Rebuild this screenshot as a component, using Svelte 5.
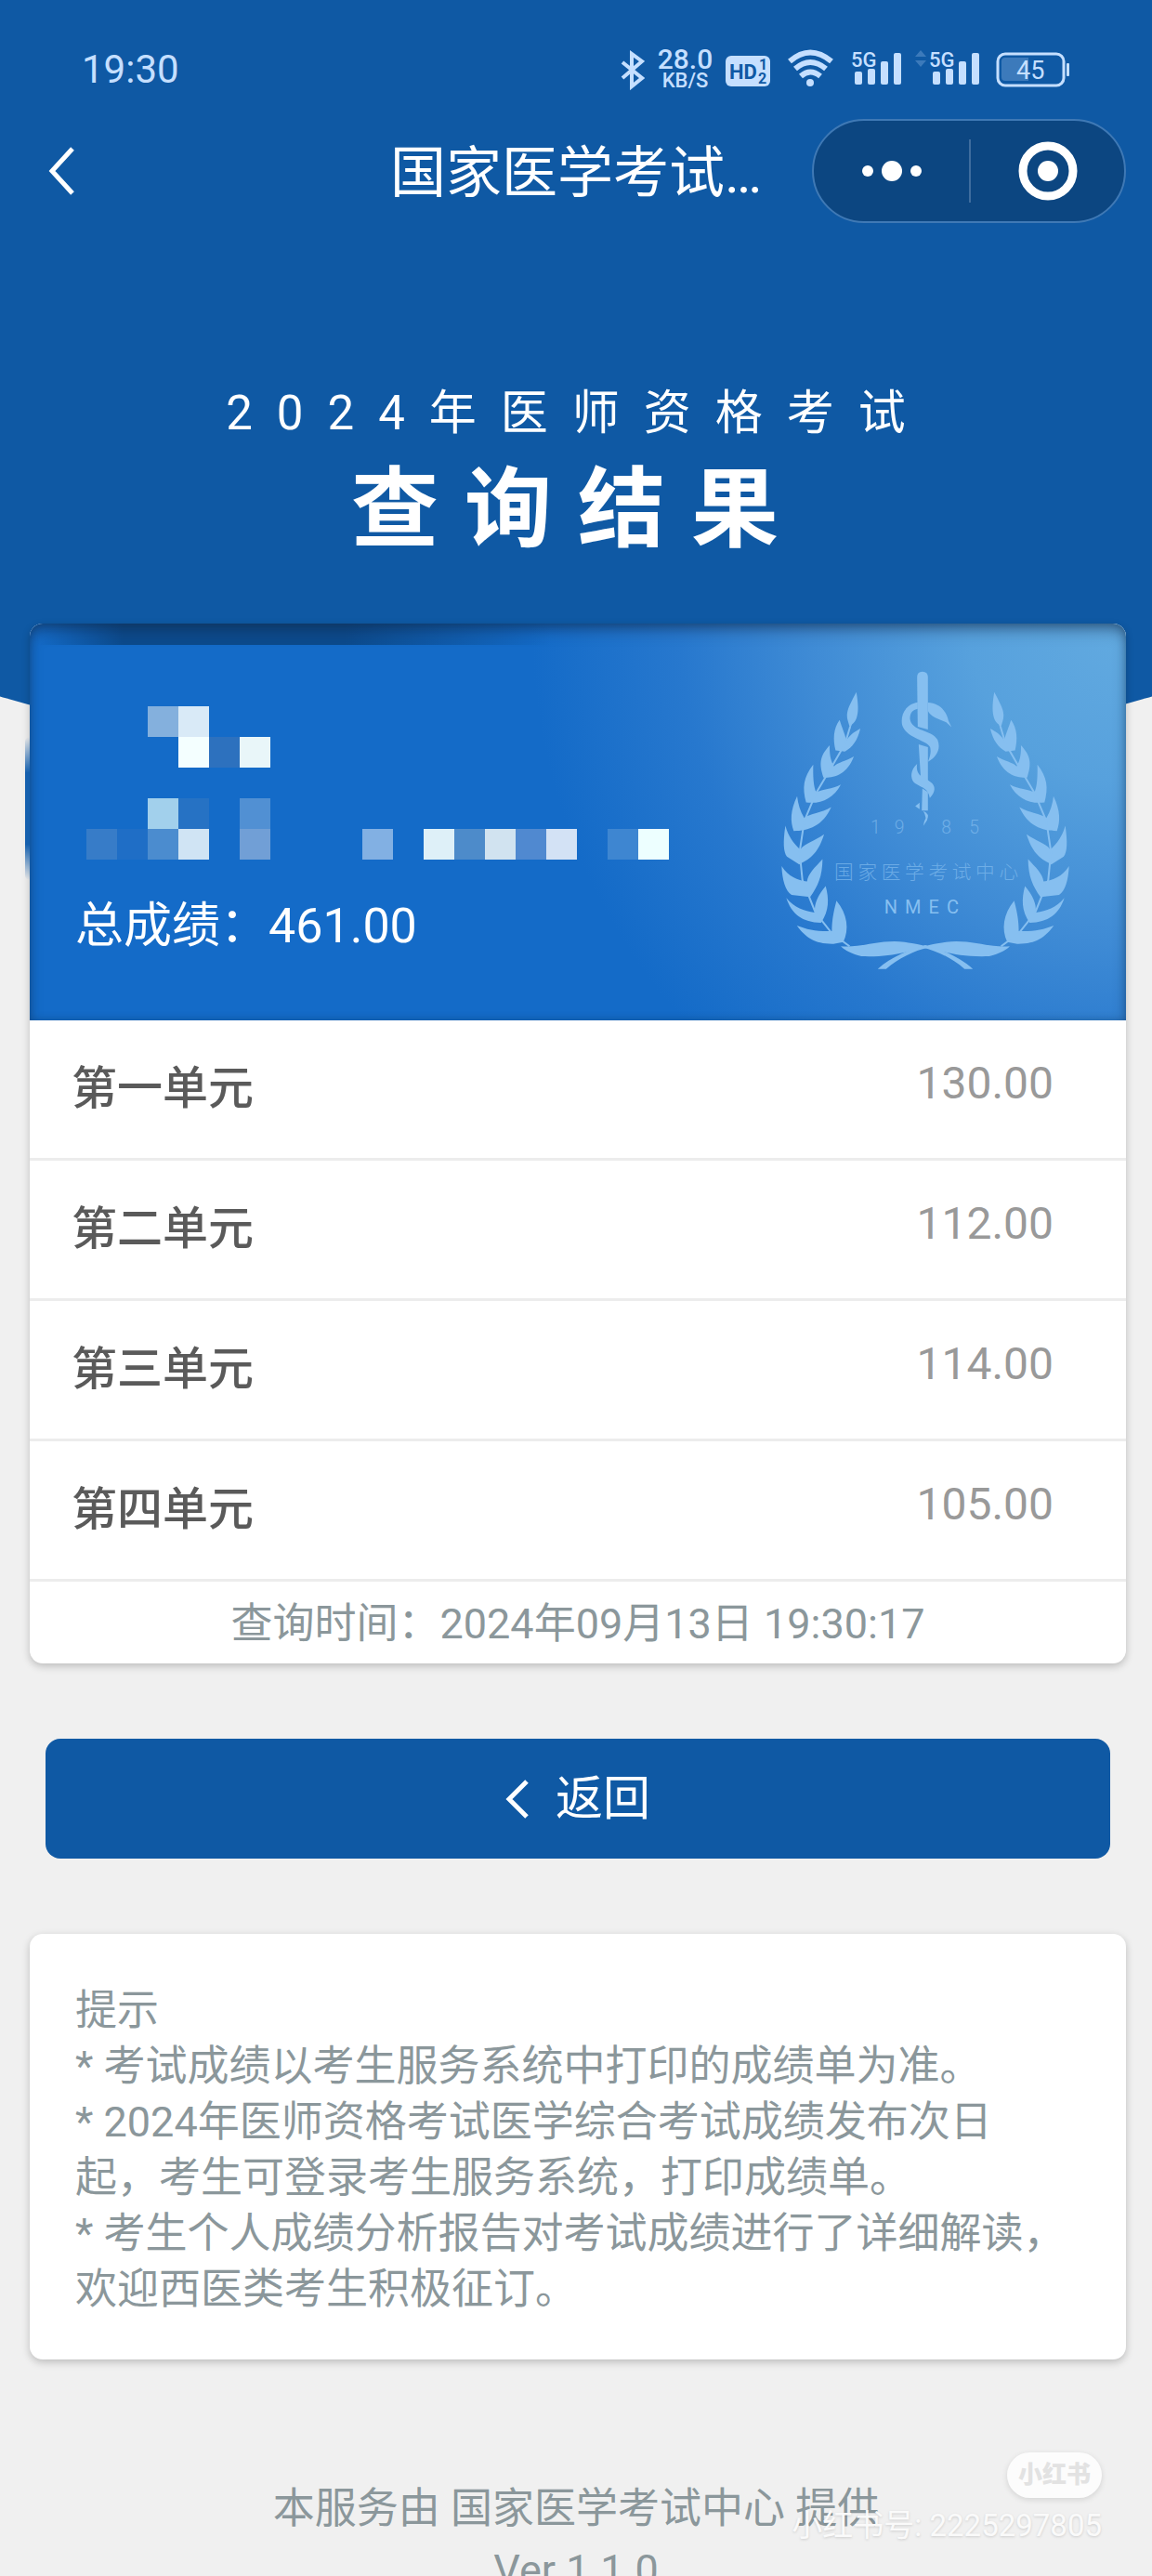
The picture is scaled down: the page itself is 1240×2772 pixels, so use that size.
<script lang="ts">
  interface Unit {
    name: string;
    score: number;
  }

  const total = 461;
  const units: Unit[] = [
    { name: "第一单元", score: 130 },
    { name: "第二单元", score: 112 },
    { name: "第三单元", score: 114 },
    { name: "第四单元", score: 105 },
  ];

  const tips = [
    "* 考试成绩以考生服务系统中打印的成绩单为准。",
    "* 2024年医师资格考试医学综合考试成绩发布次日起，考生可登录考生服务系统，打印成绩单。",
    "* 考生个人成绩分析报告对考试成绩进行了详细解读，欢迎西医类考生积极征订。",
  ];

  // masked name and id number: [column, row, colour]
  const mosaic: [number, number, string][] = [
    [2, 0, "#84b0dd"], [3, 0, "#d9eaf7"],
    [3, 1, "#f4ffff"], [4, 1, "#2d71be"], [5, 1, "#e9f6f9"],
    [2, 3, "#a2d0ec"], [3, 3, "#2672c4"], [5, 3, "#5190d3"],
    [0, 4, "#377cc8"], [1, 4, "#1f6ec6"], [2, 4, "#4b8ccf"], [3, 4, "#d0e4f4"], [5, 4, "#719fd6"],
    [9, 4, "#82b0e3"], [11, 4, "#def0f8"], [12, 4, "#4d8bca"], [13, 4, "#d1e3f0"],
    [14, 4, "#5089d0"], [15, 4, "#d3e2f5"], [17, 4, "#3e86d1"], [18, 4, "#edffff"],
  ];

  function fmt(value: number): string {
    return value.toFixed(2);
  }
</script>

{#snippet signalBars(x: number)}
  <text {x} y="24" font-size="22" font-weight="500">5G</text>
  <rect x={x + 4} y="29" width="8" height="14" rx="2" />
  <rect x={x + 18} y="26" width="8" height="17" rx="2" />
  <rect x={x + 32} y="18" width="8" height="25" rx="2" />
  <rect x={x + 46} y="9" width="8" height="34" rx="2" />
{/snippet}

{#snippet wreathHalf()}
  <path d="M424 284C400 330 388 350 397 378L404 402L410 388C430 375 434 340 424 284Z" />
  <path d="M370 374C350 402 348 435 357 472L387 476C412 462 428 440 437 402C415 414 402 424 392 440C386 415 378 400 370 374Z" />
  <path d="M338 456C306 490 303 515 318 560C350 562 394 552 416 492C390 508 365 510 352 524C340 505 337 480 338 456Z" />
  <path d="M285 518C253 560 249 592 262 640C310 646 350 627 374 582C345 598 315 595 295 608C285 590 284 550 285 518Z" />
  <path d="M233 620C210 668 211 702 222 732C270 732 317 715 343 655C310 675 275 675 256 690C243 670 236 645 233 620Z" />
  <path d="M195 715C187 770 189 800 200 815L240 840C280 820 302 800 320 743C290 765 260 770 243 792C220 770 205 750 195 715Z" />
  <path d="M183 845C185 890 195 925 215 938L275 945C300 910 314 880 315 823C290 850 268 870 265 895C235 890 205 880 183 845Z" />
  <path d="M198 948C215 1000 250 1027 310 1028C337 990 336 950 325 910C300 940 288 965 290 995C255 990 225 980 198 948Z" />
  <path d="M232 1037C260 1075 290 1097 350 1096L382 1090C402 1050 395 1000 360 957C348 1000 345 1030 345 1055C300 1057 265 1050 232 1037Z" />
  <path class="stem" d="M404 396L388 450L350 516L294 610L256 700L241 800L250 890L292 995L345 1062L402 1104" />
  <path d="M374 1104C440 1110 500 1080 580 1090C620 1096 636 1100 650 1105C600 1116 550 1140 440 1136C410 1128 390 1120 374 1104Z" />
  <path d="M650 1100C600 1112 535 1138 493 1177L520 1177C560 1142 610 1118 655 1108Z" />
{/snippet}

<div class="screen">
  <div class="backdrop"></div>

  <div class="status">
    <span class="clock">19:30</span>
    <div class="indicators">
      <svg width="26" height="44" viewBox="0 0 26 44" aria-hidden="true">
        <path class="line" d="M2 14L23 31L12 40V5L23 13L2 31" />
      </svg>
      <span class="speed"><b>28.0</b><small>KB/S</small></span>
      <svg width="48" height="44" viewBox="0 0 48 44" aria-hidden="true">
        <rect y="7" width="48" height="33" rx="6" />
        <g class="dark">
          <text x="4" y="32" font-size="22" font-weight="700">HD</text>
          <text x="36" y="22" font-size="16" font-weight="700">1</text>
          <text x="35" y="37" font-size="16" font-weight="700">2</text>
        </g>
      </svg>
      <svg width="59" height="44" viewBox="0 0 59 44" aria-hidden="true">
        <g class="arc">
          <path d="M7 13Q29 -6 52 13" />
          <path d="M13 21Q29 7 46 21" />
          <path d="M19 29Q29 20 40 29" />
        </g>
        <circle cx="29" cy="36" r="4" />
      </svg>
      <svg width="55" height="54" viewBox="0 0 55 54" aria-hidden="true">
        {@render signalBars(0)}
      </svg>
      <svg width="70" height="54" viewBox="0 0 70 54" aria-hidden="true">
        <path opacity="0.25" d="M0 13L6 6L12 13ZM0 17H12L6 24Z" />
        {@render signalBars(15)}
      </svg>
      <svg width="82" height="44" viewBox="0 0 82 44" aria-hidden="true">
        <rect class="case" x="5" y="5" width="71" height="34" rx="8" />
        <path opacity="0.25" d="M13 9H38V34H13Q9 34 9 30V13Q9 9 13 9Z" />
        <rect x="79" y="15" width="3" height="14" rx="1" />
        <text x="25" y="32" font-size="27">45</text>
      </svg>
    </div>
  </div>

  <header class="nav">
    <button class="back" aria-label="返回上一页">
      <svg width="30" height="56" viewBox="0 0 30 56"><path d="M26 4L4 28L26 52" /></svg>
    </button>
    <span class="title">国家医学考试…</span>
    <div class="capsule">
      <button aria-label="更多">
        <svg width="64" height="64" viewBox="0 0 64 64">
          <circle cx="6" cy="32" r="6" />
          <circle cx="32" cy="32" r="11" />
          <circle cx="58" cy="32" r="6" />
        </svg>
      </button>
      <button aria-label="关闭">
        <svg width="64" height="64" viewBox="0 0 64 64">
          <circle class="ring" cx="32" cy="32" r="27" />
          <circle cx="32" cy="32" r="11" />
        </svg>
      </button>
    </div>
  </header>

  <main>
    <div class="hero">
      <p>2024年医师资格考试</p>
      <h1>查询结果</h1>
    </div>

    <section class="card result">
      <div class="summary">
        <svg class="mosaic" width="627" height="165" viewBox="0 0 627 165" shape-rendering="crispEdges" aria-hidden="true">
          {#each mosaic as [col, row, fill]}
            <rect x={col * 33} y={row * 33} width="33" height="33" {fill} />
          {/each}
        </svg>
        <p class="total">总成绩：{fmt(total)}</p>
        <svg class="emblem" width="317" height="327" viewBox="170 210 950 980" aria-hidden="true">
          {@render wreathHalf()}
          <g transform="translate(1293 0) scale(-1 1)">{@render wreathHalf()}</g>
          <path d="M620 236Q620 218 637 218Q655 218 655 236V405L622 396Z" />
          <path d="M625 453L655 462V578L632 566Z" />
          <path d="M637 595L655 606V666H635Z" />
          <path d="M655 318C692 320 714 344 721 376L731 397L713 381C688 372 662 362 655 345Z" />
          <path d="M622 317C574 325 564 372 574 396C590 434 652 440 662 462C666 478 662 492 655 509C686 492 697 465 686 438C668 404 602 412 597 370C597 346 610 341 622 338Z" />
          <path d="M620 516C599 535 597 560 610 576C630 592 656 592 661 626C680 606 679 590 668 578C650 560 613 560 620 516Z" />
          <path d="M614 652L628 641V662ZM640 668Q662 676 652 698L640 716Q642 700 648 690Q646 678 640 668Z" />
          <text class="faint" x="470 547 698 788" y="741" font-size="58">1985</text>
          <text class="faint cjk" x="353" y="886" font-size="62">国家医学考试中心</text>
          <text class="latin" x="514" y="998" font-size="60">NMEC</text>
        </svg>
      </div>

      <table>
        <tbody>
          {#each units as unit}
            <tr>
              <th scope="row">{unit.name}</th>
              <td>{fmt(unit.score)}</td>
            </tr>
          {/each}
        </tbody>
      </table>
      <p class="time">查询时间：2024年09月13日 19:30:17</p>
    </section>

    <button class="return">
      <svg width="26" height="44" viewBox="0 0 26 44" aria-hidden="true"><path d="M23 3L4 22L23 41" /></svg>
      返回
    </button>

    <section class="card tips">
      <h2>提示</h2>
      {#each tips as tip}
        <p>{tip}</p>
      {/each}
    </section>
  </main>

  <footer>
    <p>本服务由 国家医学考试中心 提供</p>
    <p>Ver 1.1.0</p>
  </footer>

  <div class="watermark">
    <span class="badge">小红书</span>
    <span class="uid">小红书号: 2225297805</span>
  </div>
</div>

<style>
  :global(body) {
    background: #f0f0f0;
  }
  .screen {
    --blue: #0f59a4;
    --pale: #c5dfff;
    --muted: #8b979b;
    position: relative;
    height: 100vh;
    overflow: hidden;
    font-family: Roboto, "Noto Sans CJK SC", sans-serif;
    background: #f0f0f0;
  }
  .screen > :not(.backdrop, .watermark) {
    position: relative;
  }
  p, h1, h2 {
    margin: 0;
    font-weight: 400;
  }
  button {
    display: flex;
    align-items: center;
    justify-content: center;
    padding: 0;
    border: 0;
    color: #fff;
    background: none;
    font: inherit;
  }

  /* curved blue area behind the header and the top of the card */
  .backdrop {
    position: absolute;
    top: 0;
    left: -20%;
    width: 140%;
    height: 826px;
    background: var(--blue);
    border-radius: 0 0 50% 50% / 0 0 255px 255px;
  }

  .status {
    display: flex;
    align-items: center;
    justify-content: space-between;
    padding: 48px 89px 26px 88px;
    color: var(--pale);
  }
  .clock {
    font-size: 42px;
    line-height: 44px;
  }
  .indicators {
    display: flex;
    align-items: center;
    gap: 14px;
  }
  .indicators svg {
    fill: var(--pale);
  }
  .line,
  .arc,
  .case {
    fill: none;
    stroke: var(--pale);
    stroke-width: 4;
  }
  .arc {
    stroke-width: 6;
  }
  .case {
    stroke-width: 3;
  }
  .dark {
    fill: var(--blue);
  }
  .speed {
    display: flex;
    flex-direction: column;
    align-items: center;
    width: 59px;
  }
  .speed b {
    font-size: 30px;
    font-weight: 500;
    line-height: 24px;
  }
  .speed small {
    font-size: 22px;
    font-weight: 500;
    line-height: 22px;
  }

  .nav {
    display: grid;
    grid-template-columns: 1fr auto 1fr;
    align-items: center;
    padding: 0 28px;
  }
  .back {
    width: 78px;
    height: 112px;
  }
  .back path,
  .return path {
    fill: none;
    stroke: #fff;
    stroke-width: 5;
  }
  .title {
    padding-top: 6px;
    color: #fff;
    font-size: 60px;
    line-height: 106px;
  }
  .capsule {
    display: grid;
    grid-template-columns: 1fr 1fr;
    justify-self: end;
    align-items: center;
    box-sizing: border-box;
    width: 338px;
    height: 112px;
    border: 2px solid #3f79b5;
    border-radius: 56px;
    background: #0c4681;
  }
  .capsule button {
    height: 68px;
  }
  .capsule button + button {
    border-left: 2px solid #3f6d9e;
  }
  .capsule circle {
    fill: #fff;
  }
  .capsule .ring {
    fill: none;
    stroke: #fff;
    stroke-width: 9;
  }

  main {
    padding: 0 28px 0 32px;
  }
  .hero {
    padding: 169px 0 62px;
    color: #fff;
    text-align: center;
  }
  .hero p {
    font-size: 51px;
    letter-spacing: 26px;
    line-height: 72px;
  }
  .hero h1 {
    margin-top: 8px;
    font-size: 94px;
    font-weight: 700;
    letter-spacing: 28px;
    line-height: 120px;
  }

  .card {
    border-radius: 14px;
    background: #fff;
    box-shadow: 0 3px 8px rgba(0, 0, 0, 0.22);
  }
  .summary {
    position: relative;
    padding: 89px 49px 66px;
    border-radius: 14px 14px 0 0;
    color: #fff;
    background:
      linear-gradient(90deg, transparent 8px, #0c4a8c 100px, #0c4a8c 340px, transparent 560px) 0 0 / 100% 23px no-repeat,
      radial-gradient(circle 640px at 100% 0, #62aae0 0, #57a1dd 170px, #3f8bd5 340px, #2778ce 480px, #146bc8 640px);
    box-shadow: inset 0 10px 16px -4px rgba(20, 40, 70, 0.5), inset 0 0 10px rgba(10, 50, 90, 0.4);
  }
  .summary::before {
    content: "";
    position: absolute;
    top: 122px;
    left: -5px;
    width: 5px;
    height: 154px;
    border-radius: 5px 0 0 5px;
    background: linear-gradient(transparent, #1560ae 25%, #1560ae 75%, transparent);
  }
  .mosaic {
    display: block;
    margin-left: 12px;
  }
  .total {
    margin-top: 37px;
    font-size: 52px;
    line-height: 70px;
  }
  .emblem {
    position: absolute;
    top: 49px;
    right: 58px;
    fill: #86bff0;
  }
  .stem {
    fill: none;
    stroke: #86bff0;
    stroke-width: 6;
  }
  .faint {
    opacity: 0.65;
    font-weight: 300;
  }
  .cjk {
    letter-spacing: 14px;
  }
  .latin {
    letter-spacing: 24px;
  }

  table {
    width: 100%;
    border-collapse: collapse;
  }
  th,
  td {
    padding: 0;
    border-bottom: 3px solid #ececec;
    line-height: 148px;
  }
  th {
    padding-left: 45px;
    color: #5a5a5a;
    font-size: 49px;
    font-weight: 500;
    text-align: left;
  }
  td {
    padding-right: 78px;
    color: #999;
    font-size: 48px;
    line-height: 136px;
    text-align: right;
    vertical-align: top;
  }
  .time {
    padding-top: 4px;
    color: var(--muted);
    font-size: 45px;
    line-height: 84px;
    text-align: center;
  }

  .return {
    gap: 28px;
    width: calc(100% - 34px);
    height: 129px;
    margin: 81px 17px;
    border-radius: 16px;
    background: var(--blue);
    font-size: 51px;
    line-height: 64px;
  }

  .tips {
    padding: 53px 60px 45px 49px;
    color: var(--muted);
    font-size: 45px;
    line-height: 60px;
  }
  .tips h2 {
    font-size: 45px;
  }

  footer {
    padding-top: 128px;
    color: var(--muted);
    font-size: 45px;
    line-height: 66px;
    text-align: center;
  }

  .watermark {
    position: absolute;
    right: 54px;
    bottom: 34px;
    display: flex;
    flex-direction: column;
    align-items: flex-end;
    gap: 10px;
    color: #fafafa;
  }
  .badge {
    padding: 0 12px;
    border-radius: 25px;
    color: #e2e2e2;
    background: #fcfcfc;
    box-shadow: 0 2px 6px rgba(0, 0, 0, 0.12);
    font-size: 26px;
    font-weight: 900;
    line-height: 49px;
  }
  .uid {
    font-size: 33px;
    line-height: 40px;
    text-shadow: 0 1px 3px rgba(0, 0, 0, 0.15);
  }
</style>
